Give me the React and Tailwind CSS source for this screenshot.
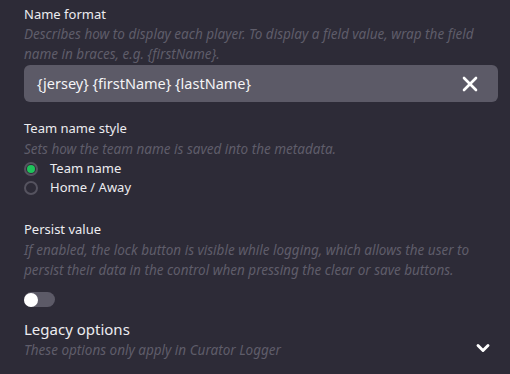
import { X, ChevronDown } from 'lucide-react';

const font = { fontFamily: '"Noto Sans", "Open Sans", sans-serif' };

function Radio({ checked, label }) {
    return (
        <label className="flex items-center gap-[12px] h-[19px]">
            <span className="w-[14px] h-[14px] rounded-full border-[2px] border-[#55535f] flex items-center justify-center">
                {checked && <span className="w-[8px] h-[8px] rounded-full bg-[#1fc35b]"></span>}
            </span>
            <span className="text-[13px] text-[#ececf0]">{label}</span>
        </label>
    );
}

export default function App() {
    return (
        <div className="w-[510px] h-[374px] bg-[#2d2b37] overflow-hidden pl-[24px] pr-[12px] pt-[4px]" style={font}>
            {/* Name format */}
            <div className="text-[13px] leading-[20px] text-[#ececf0]">Name format</div>
            <p className="text-[13.5px] leading-[20px] italic text-[#5f5d6a] pr-[20px]">
                Describes how to display each player. To display a field value, wrap the field name in braces, e.g. {'{firstName}'}.
            </p>
            <div className="mt-[1px] h-[37px] rounded-[6px] bg-[#5c5a67] flex items-center justify-between pl-[13px] pr-[16px]">
                <span className="text-[14.5px] text-[#f4f4f6]">{'{jersey} {firstName} {lastName}'}</span>
                <X size={24} strokeWidth={2.6} className="text-white" />
            </div>

            {/* Team name style */}
            <div className="mt-[16px] text-[13px] leading-[20px] text-[#ececf0]">Team name style</div>
            <p className="pt-[1px] text-[13.5px] leading-[20px] italic text-[#5f5d6a]">Sets how the team name is saved into the metadata.</p>
            <div className="flex flex-col">
                <Radio checked label="Team name" />
                <Radio label="Home / Away" />
            </div>

            {/* Persist value */}
            <div className="mt-[22px] text-[13px] leading-[20px] text-[#ececf0]">Persist value</div>
            <p className="pt-[1px] text-[13.5px] leading-[20px] italic text-[#5f5d6a] pr-[20px]">
                If enabled, the lock button is visible while logging, which allows the user to persist their data in the control when pressing the clear or save buttons.
            </p>
            <div className="mt-[12px] w-[31px] h-[15px] rounded-full bg-[#5c5a67] flex items-center">
                <span className="w-[14px] h-[14px] rounded-full bg-white"></span>
            </div>

            {/* Legacy options */}
            <div className="mt-[11px] flex items-end justify-between">
                <div>
                    <div className="text-[15px] leading-[22px] text-[#ececf0]">Legacy options</div>
                    <p className="text-[13.5px] leading-[20px] italic text-[#5f5d6a]">These options only apply in Curator Logger</p>
                </div>
                <ChevronDown size={20} strokeWidth={3.5} className="text-white mb-[2px] mr-[5px]" />
            </div>
        </div>
    );
}
